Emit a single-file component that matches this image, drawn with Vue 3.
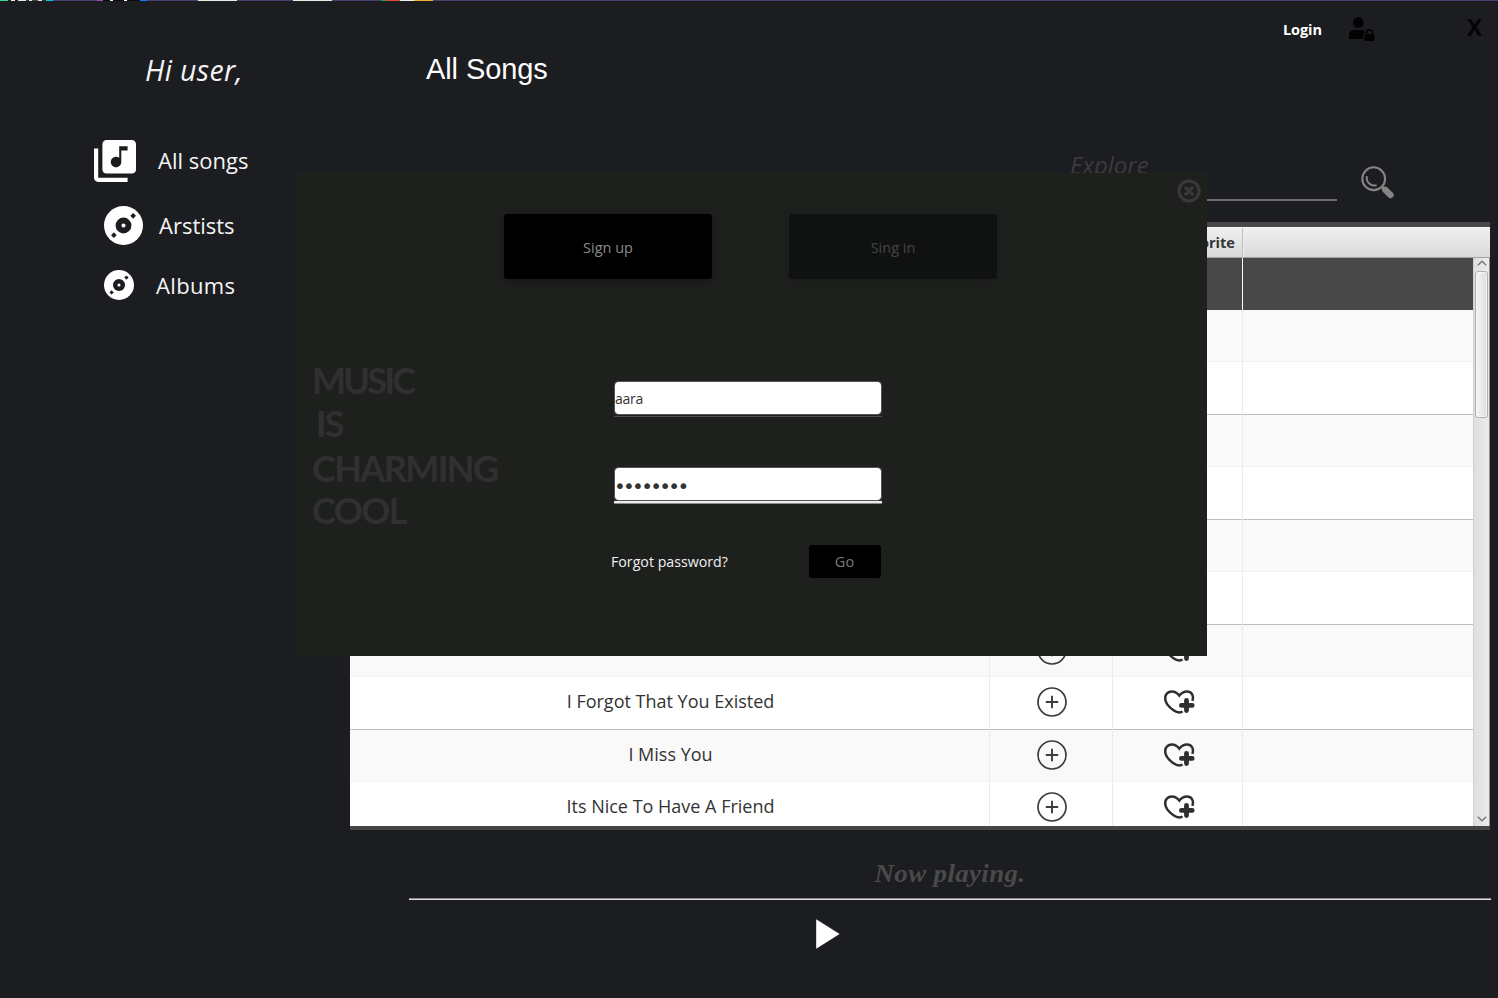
<script setup>
const navItems = [
  { id: 'songs', label: 'All songs', icon: 'library' },
  { id: 'artists', label: 'Arstists', icon: 'disc' },
  { id: 'albums', label: 'Albums', icon: 'disc' },
]

const songs = [
  { id: 1, title: '', selected: true },
  { id: 2, title: '' },
  { id: 3, title: '' },
  { id: 4, title: '' },
  { id: 5, title: '' },
  { id: 6, title: '' },
  { id: 7, title: '' },
  { id: 8, title: '' },
  { id: 9, title: 'I Forgot That You Existed' },
  { id: 10, title: 'I Miss You' },
  { id: 11, title: 'Its Nice To Have A Friend' },
]

const slogan = ['music', 'is', 'charming', 'cool']
</script>

<template>
  <div class="app">
    <div class="strip"></div>
    <div class="layout">
      <aside class="sidebar">
        <p class="greeting">Hi user,</p>
        <nav class="nav">
          <a v-for="item in navItems" :key="item.id" class="nav-item" :class="item.id">
            <svg v-if="item.icon === 'library'" class="nav-icon" viewBox="2 2 20 20">
              <path fill="#fff" d="M20 2H8c-1.1 0-2 .9-2 2v12c0 1.1.9 2 2 2h12c1.1 0 2-.9 2-2V4c0-1.1-.9-2-2-2zm-2 5h-3v5.5c0 1.38-1.12 2.5-2.5 2.5S10 13.88 10 12.5s1.12-2.5 2.5-2.5c.57 0 1.08.19 1.5.51V5h4v2zM4 6H2v14c0 1.1.9 2 2 2h14v-2H4V6z" />
            </svg>
            <svg v-else class="nav-icon" viewBox="0 0 40 40">
              <circle cx="20" cy="20" r="20" fill="#fff" />
              <circle cx="20" cy="20" r="8.1" fill="#1c1d20" />
              <circle cx="20" cy="20" r="2.1" fill="#fff" />
              <path fill="#1c1d20" d="M29.9 7.2l2.9 2.9-2.9 2.9-2.9-2.9zM10.1 27l2.9 2.9-2.9 2.9-2.9-2.9z" />
            </svg>
            <span class="nav-label">{{ item.label }}</span>
          </a>
        </nav>
      </aside>

      <main class="main">
        <header class="topbar">
          <span class="login">Login</span>
          <svg class="user-icon" viewBox="0 0 26 25">
            <circle cx="9.2" cy="5.4" r="5.3" />
            <path d="M0 22V18.5Q0 13 5 13h8.5q2.2 0 2.2 1.6v1.2q-1.500.6-1.500 2.400V22z" />
            <path fill-rule="evenodd" d="M15.400 18.200q0-1.200 1.200-1.200v-1.200a3.800 3.800 0 0 1 7.600 0V17q1.200 0 1.200 1.200v4.600q0 1.300-1.300 1.300h-7.400q-1.300 0-1.300-1.300zM18.400 17h4v-1.200a2 2 0 0 0-4 0z" />
          </svg>
          <span class="close-app">X</span>
        </header>
        <h1 class="title">All Songs</h1>

        <div class="search">
          <div class="search-field">Explore</div>
          <svg class="search-icon" viewBox="0 0 33 33" fill="none" stroke="#858585">
            <circle cx="12.7" cy="12.7" r="11.4" stroke-width="2.1" />
            <path d="M6 10.300a7.400 7.400 0 0 0 9.600 8.800" stroke-width="2" />
            <path d="M20.800 20.800l3.200 3.200" stroke-width="3" />
            <path d="M24.200 23.800l5.300 5.300" stroke-width="6.300" stroke-linecap="round" />
          </svg>
        </div>

        <section class="table">
          <div class="thead">
            <div class="th c-title"></div>
            <div class="th c-add"></div>
            <div class="th c-fav">Add to favorite</div>
            <div class="th c-rest"></div>
          </div>
          <div class="tbody">
            <div class="rows">
              <div v-for="song in songs" :key="song.id" class="row" :class="{ selected: song.selected }">
                <div class="td c-title"><span class="song">{{ song.title }}</span></div>
                <div class="td c-add">
                  <svg width="30" height="30" viewBox="0 0 30 30" fill="none" stroke="#3c3c3c">
                    <circle cx="15" cy="15" r="14" stroke-width="1.7" />
                    <path d="M15 8.800v12.400M8.800 15h12.400" stroke-width="1.900" />
                  </svg>
                </div>
                <div class="td c-fav">
                  <svg class="heart" width="31" height="24" viewBox="0 0 31 24" fill="none" stroke="#2f2f2f">
                    <path d="M28.400 10.800C30.200 5.500 27.400 1.400 23 1.400c-3.400 0-5.600 1.300-7.700 4.200C13.200 2.700 10.800 1.400 8 1.400 3.800 1.400 1.200 4.300 1.200 8.300c0 5.500 4.600 9.500 8.300 11.900 2 1.300 3.800 2 6 2.300q1.800-.1 3-1.100" stroke-width="2.500" />
                    <path d="M22.500 10.300v10.200M17.400 15.400h10.800" stroke-width="4.800" stroke-linecap="round" />
                  </svg>
                </div>
                <div class="td c-rest"></div>
              </div>
            </div>
            <div class="scrollbar">
              <svg class="arrow" viewBox="0 0 10 6"><path d="M.8 5.200L5 1.200l4.200 4" /></svg>
              <div class="thumb"></div>
              <svg class="arrow down" viewBox="0 0 10 6"><path d="M.8.800L5 4.800 9.200.800" /></svg>
            </div>
          </div>
        </section>

        <footer class="player">
          <p class="now-playing">Now playing.</p>
          <div class="progress"></div>
          <svg class="play" viewBox="0 0 24 30"><path d="M.2.300L23.600 15 .2 29.700z" fill="#fff" /></svg>
        </footer>
      </main>
    </div>

    <div class="modal">
      <svg class="modal-close" viewBox="0 0 24 24" fill="none" stroke="#383938">
        <circle cx="12" cy="12" r="10" stroke-width="3.200" />
        <path d="M7.800 7.800l8.400 8.400M16.200 7.800l-8.400 8.400" stroke-width="3.200" />
      </svg>
      <div class="tabs">
        <button class="tab active">Sign up</button>
        <button class="tab muted">Sing in</button>
      </div>
      <div class="modal-body">
        <div class="slogan">
          <span v-for="word in slogan" :key="word" class="word" :class="word">{{ word.toUpperCase() }}</span>
        </div>
        <form class="form">
          <div class="field name">aara</div>
          <div class="line thin"></div>
          <div class="field password">••••••••</div>
          <div class="line thick"></div>
          <div class="actions">
            <span class="forgot">Forgot password?</span>
            <button type="button" class="go">Go</button>
          </div>
        </form>
      </div>
    </div>
  </div>
</template>

<style>
body {
  margin: 0;
  background: #1c1d20;
}
</style>

<style scoped>
* {
  box-sizing: border-box;
}
.app {
  position: relative;
  width: 1498px;
  height: 998px;
  overflow: hidden;
  background: #1c1d20;
  font-family: "Open Sans", "Noto Sans", sans-serif;
}
svg {
  display: block;
  flex: none;
}
p,
h1 {
  margin: 0;
  font-weight: 400;
}
button {
  border: 0;
  font-family: inherit;
}
.strip {
  height: 1px;
  background: linear-gradient(90deg,
    #2fdc8c 0 8px, #222 8px 11px, #e8efe8 11px 15px, #222 15px 18px, #dde5dd 18px 26px, #333 26px 29px,
    #dde5dd 29px 32px, #444 32px 38px, #dde5dd 38px 42px, #333 42px 46px, #00c8e0 46px 53px, #474070 53px 97px,
    #a0509a 97px 103px, #0a0a0a 103px 110px, #fff 110px 113px, #0a0a0a 113px 124px, #fff 124px 127px,
    #0a0a0a 127px 140px, #0a7cff 140px 147px, #474070 147px 198px, #e4ece8 198px 237px, #474070 237px 293px,
    #e4ece8 293px 332px, #474070 332px 381px, #1f9d58 381px 386px, #dd4b3e 386px 400px, #eef0ee 400px 414px,
    #f0b034 414px 433px, #474070 433px);
}
.layout {
  display: flex;
}

/* Sidebar */
.sidebar {
  width: 350px;
  padding-top: 49px;
}
.greeting {
  padding-left: 145px;
  font-size: 28.5px;
  font-style: italic;
  line-height: 40px;
  letter-spacing: 0.35px;
  color: #f4f4f4;
}
.nav {
  display: flex;
  flex-direction: column;
  margin-top: 50px;
}
.nav-item {
  display: flex;
  align-items: center;
  font-size: 22px;
  line-height: 30px;
  color: #f4f4f4;
}
.nav-item.songs {
  height: 42px;
  padding-left: 94px;
  gap: 22px;
}
.nav-item.artists {
  height: 39px;
  margin-top: 24px;
  padding-left: 104px;
  gap: 16px;
}
.nav-item.albums {
  height: 30px;
  margin-top: 25px;
  padding-left: 104px;
  gap: 22px;
  letter-spacing: 0.35px;
}
.songs .nav-label,
.artists .nav-label {
  padding-bottom: 2px;
}
.songs .nav-icon {
  width: 42px;
  height: 42px;
}
.artists .nav-icon {
  width: 39px;
  height: 39px;
}
.albums .nav-icon {
  width: 30px;
  height: 30px;
}

/* Main column */
.main {
  width: 1148px;
}
.topbar {
  display: flex;
  align-items: center;
  height: 57px;
  padding-left: 933px;
}
.login {
  width: 66px;
  font-size: 14.5px;
  font-weight: 700;
  line-height: 20px;
  letter-spacing: -0.1px;
  color: #fff;
}
.user-icon {
  width: 26px;
  height: 25px;
  fill: #020203;
}
.close-app {
  margin-left: 92px;
  padding-bottom: 4px;
  font-size: 22.5px;
  font-weight: 700;
  line-height: 30px;
  color: #050506;
}
.title {
  padding-left: 76px;
  font-family: "Liberation Sans", Arial, sans-serif;
  font-size: 29px;
  line-height: 22px;
  letter-spacing: -0.1px;
  color: #fff;
}
.search {
  display: flex;
  align-items: flex-end;
  gap: 24px;
  height: 55px;
  margin-top: 66px;
  padding-left: 720px;
}
.search-field {
  width: 267px;
  height: 55px;
  border-bottom: 2px solid #6e6e70;
  font-size: 24px;
  font-style: italic;
  line-height: 38px;
  color: #3b3b3d;
}
.search-icon {
  width: 33px;
  height: 33px;
  margin-bottom: 2px;
}

/* Song table */
.table {
  width: 1140px;
  height: 608px;
  margin-top: 21px;
  border-top: 5px solid #484848;
  border-bottom: 4px solid #454545;
  background: #fff;
  overflow: hidden;
}
.thead {
  display: flex;
  height: 31px;
  border-top: 1px solid #f8f8f8;
  border-bottom: 1px solid #a4a4a4;
  background: linear-gradient(#f0f0f0, #d9d9d9);
}
.th {
  border-right: 1px solid #c0c0c0;
  box-shadow: inset 1px 0 #ededed;
  font-size: 14.6px;
  font-weight: 700;
  line-height: 29px;
  text-align: right;
  white-space: nowrap;
  color: #333;
}
.th.c-fav {
  padding-right: 7px;
}
.thead .c-rest {
  flex: 1;
  border-right: 0;
}
.c-title {
  width: 640px;
}
.c-add {
  width: 123px;
}
.c-fav {
  width: 130px;
}
.c-rest {
  width: 230px;
}
.tbody {
  display: flex;
  height: 568px;
  overflow: hidden;
}
.row {
  display: flex;
  height: 53px;
  background: #fff;
}
.row:nth-child(even) {
  height: 52px;
  background: #f9f9f9;
}
.row:first-child {
  height: 52px;
}
.td {
  display: flex;
  align-items: center;
  justify-content: center;
  padding-bottom: 3px;
  border-right: 1px solid #ebebeb;
  box-shadow: inset 0 -1px #bdbdbd;
  font-size: 18px;
  line-height: 26px;
  color: #333;
}
.td.c-title {
  padding-left: 2px;
}
.song {
  padding-bottom: 2px;
}
.td.c-add {
  padding-left: 2px;
}
.row:nth-child(even) .td {
  box-shadow: inset 0 -1px #f2f2f2;
}
.td.c-rest {
  border-right: 0;
}
.row.selected {
  background: #484848;
}
.row.selected .td {
  box-shadow: none;
  border-right-color: #fff;
}
.heart {
  margin-left: 3px;
}
.scrollbar {
  display: flex;
  flex-direction: column;
  align-items: center;
  width: 17px;
  border-left: 1px solid #d2d2d2;
  border-right: 1px solid #8a8a8a;
  background: linear-gradient(90deg, #dedede, #ececec);
}
.arrow {
  width: 10px;
  height: 6px;
  margin: 2px 0 5px;
  fill: none;
  stroke: #777;
  stroke-width: 1.4;
}
.thumb {
  width: 13px;
  height: 147px;
  border: 1px solid #b0b0b0;
  border-radius: 3px;
  background: linear-gradient(90deg, #f6f6f6, #dcdcdc);
  box-shadow: inset 0 0 0 1px #f4f4f4;
}
.arrow.down {
  margin: auto 0 4px;
}

/* Player */
.player {
  width: 1082px;
  margin-left: 59px;
  padding-top: 29px;
}
.now-playing {
  font-family: "Liberation Serif", "Times New Roman", serif;
  font-size: 25px;
  font-style: italic;
  font-weight: 700;
  line-height: 30px;
  letter-spacing: 0.3px;
  text-align: center;
  color: #4a4a4a;
  transform: scaleX(1.08);
}
.progress {
  height: 2px;
  margin-top: 9px;
  border-top: 1px solid #8c8c8e;
  background: #dcdcdc;
}
.play {
  width: 24px;
  height: 30px;
  margin: 19px 0 0 407px;
}

/* Login dialog */
.modal {
  position: absolute;
  left: 295px;
  top: 173px;
  width: 912px;
  height: 483px;
  background: #1e201e;
}
.modal-close {
  position: absolute;
  top: 6px;
  right: 6px;
  width: 24px;
  height: 24px;
}
.tabs {
  display: flex;
  gap: 77px;
  padding: 41px 0 0 209px;
}
.tab {
  width: 208px;
  height: 65px;
  padding: 2px 0 0;
  border-radius: 3px;
  font-size: 14.5px;
  line-height: 20px;
}
.tab.active {
  background: #000;
  color: #8a8a8a;
  box-shadow: 0 3px 12px rgba(0, 0, 0, 0.3);
}
.tab.muted {
  background: #101211;
  color: #444544;
  box-shadow: 0 3px 12px rgba(0, 0, 0, 0.12);
}
.modal-body {
  display: flex;
  padding: 79px 0 0 17px;
}
.slogan {
  display: flex;
  flex-direction: column;
  width: 302px;
  padding-top: 1px;
  font-family: Lato, "Open Sans", sans-serif;
  font-size: 36px;
  font-weight: 700;
  line-height: 43px;
  color: #303030;
}
.word.music {
  letter-spacing: -2.7px;
}
.word.is {
  padding-left: 4px;
  letter-spacing: -2px;
}
.word.charming {
  margin-top: 2px;
  letter-spacing: -1.6px;
}
.word.cool {
  margin-top: -1px;
  letter-spacing: -1.6px;
}
.form {
  width: 268px;
  padding-top: 23px;
}
.field {
  height: 34px;
  border: 1px solid #555;
  border-radius: 4px;
  background: #fff;
  background-clip: padding-box;
  font-size: 14px;
  line-height: 33px;
  letter-spacing: -0.3px;
  color: #333;
}
.field.password {
  margin-top: 50px;
  font-family: "DejaVu Sans", sans-serif;
  font-size: 20px;
  line-height: 36px;
  letter-spacing: -2.74px;
  text-indent: -1px;
}
.line.thin {
  height: 1px;
  margin-top: 1px;
  background: #4d4e4d;
}
.line.thick {
  height: 3px;
  border-bottom: 1px solid #8c8c8c;
  background: #eaeeea;
}
.actions {
  display: flex;
  align-items: center;
  justify-content: space-between;
  width: 270px;
  margin: 41px 0 0 -3px;
}
.forgot {
  font-size: 14.2px;
  line-height: 20px;
  color: #f2f2f2;
}
.go {
  width: 72px;
  height: 33px;
  padding: 0 1px 0 0;
  border-radius: 3px;
  background: #000;
  font-size: 14.5px;
  line-height: 20px;
  color: #7c7c7c;
}
</style>
